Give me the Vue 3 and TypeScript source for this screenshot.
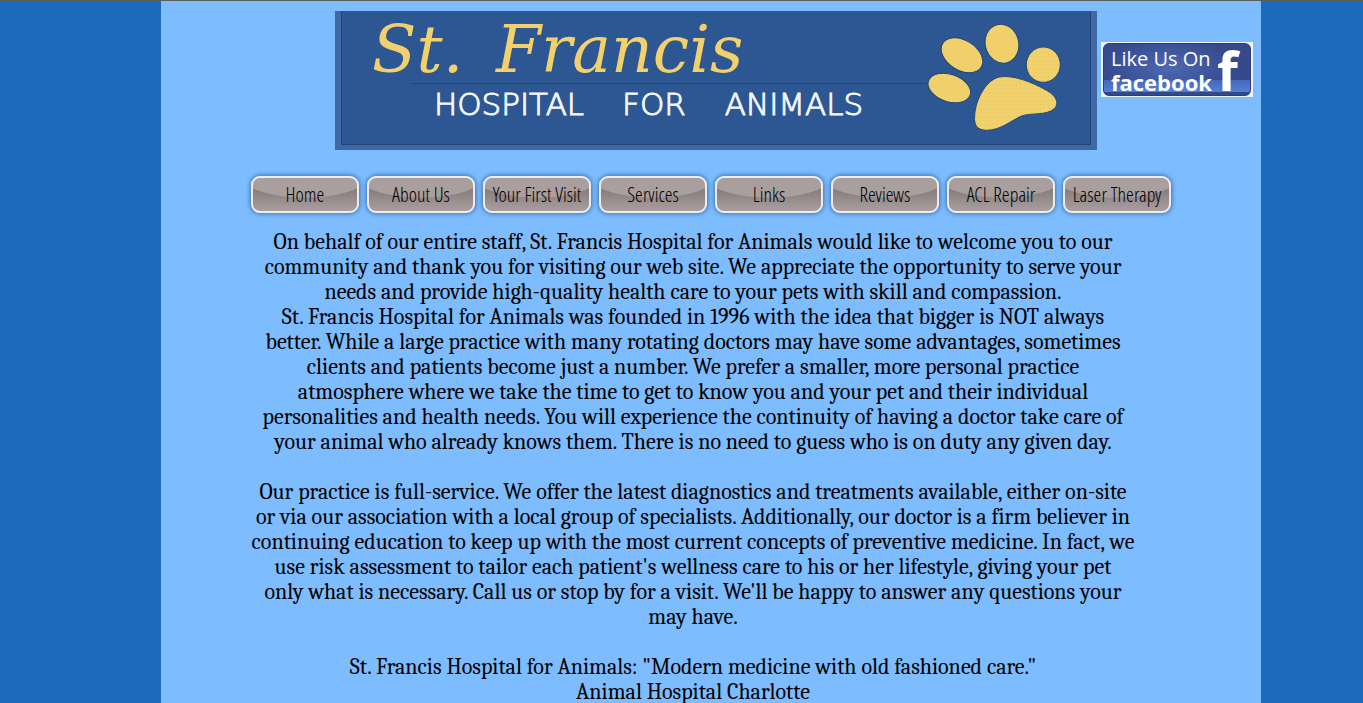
<script setup lang="ts">
interface Paragraph {
  id: string
  lines: string[]
}

const navItems: string[] = [
  'Home',
  'About Us',
  'Your First Visit',
  'Services',
  'Links',
  'Reviews',
  'ACL Repair',
  'Laser Therapy',
]

const paragraphs: Paragraph[] = [
  {
    id: 'welcome',
    lines: [
      'On behalf of our entire staff, St. Francis Hospital for Animals would like to welcome you to our',
      'community and thank you for visiting our web site. We appreciate the opportunity to serve your',
      'needs and provide high-quality health care to your pets with skill and compassion.',
      'St. Francis Hospital for Animals was founded in 1996 with the idea that bigger is NOT always',
      'better. While a large practice with many rotating doctors may have some advantages, sometimes',
      'clients and patients become just a number. We prefer a smaller, more personal practice',
      'atmosphere where we take the time to get to know you and your pet and their individual',
      'personalities and health needs. You will experience the continuity of having a doctor take care of',
      'your animal who already knows them. There is no need to guess who is on duty any given day.',
    ],
  },
  {
    id: 'practice',
    lines: [
      'Our practice is full-service. We offer the latest diagnostics and treatments available, either on-site',
      'or via our association with a local group of specialists. Additionally, our doctor is a firm believer in',
      'continuing education to keep up with the most current concepts of preventive medicine. In fact, we',
      "use risk assessment to tailor each patient's wellness care to his or her lifestyle, giving your pet",
      "only what is necessary. Call us or stop by for a visit. We'll be happy to answer any questions your",
      'may have.',
    ],
  },
  {
    id: 'motto',
    lines: [
      'St. Francis Hospital for Animals: "Modern medicine with old fashioned care."',
      'Animal Hospital Charlotte',
    ],
  },
]
</script>

<template>
  <div class="page">
    <div class="column">
      <header class="header">
        <svg class="banner" viewBox="0 0 762 139" role="img" aria-label="St. Francis Hospital for Animals">
          <defs>
            <pattern id="weave" width="4" height="4" patternUnits="userSpaceOnUse">
              <rect width="4" height="4" fill="#2d5793" />
              <path d="M0 0h2v1h-2zM2 2h2v1h-2z" fill="#305a97" />
              <path d="M3 0h1v2h-1zM1 2h1v2h-1z" fill="#2a5490" />
            </pattern>
            <pattern id="cloth" width="12" height="12" patternUnits="userSpaceOnUse">
              <rect width="12" height="12" fill="#f2d26c" />
              <path d="M0 0h12v2h-12zM0 0h2v12h-2z" fill="#edcd69" />
            </pattern>
          </defs>
          <rect width="762" height="139" fill="#3f68a5" />
          <rect x="6" width="750" height="134" fill="url(#weave)" />
          <path d="M6.500 0V133.500H755.500V0" fill="none" stroke="#1f447c" />
          <path d="M76 72.500H600" stroke="#23497f" />
          <text class="script" x="37" y="61">St.</text>
          <text class="script" x="161" y="61">Francis</text>
          <text class="caps" x="174" y="104">HOSPITAL</text>
          <text class="caps" x="319" y="104">FOR</text>
          <text class="caps" x="459" y="104">ANIMALS</text>
          <g transform="translate(385 -11) scale(0.3333)" fill="url(#cloth)" stroke="#234675" stroke-width="3">
            <ellipse cx="688" cy="264" rx="66" ry="41" transform="rotate(19 688 264)" />
            <ellipse cx="726" cy="166" rx="68" ry="45" transform="rotate(32 726 166)" />
            <ellipse cx="846" cy="131" rx="50" ry="59" transform="rotate(-15 846 131)" />
            <ellipse cx="970" cy="194" rx="51" ry="53" />
            <path d="M764 350C765 302 797 240 838 231C880 224 935 246 978 270C1007 286 1020 308 1003 326C981 347 932 338 905 348C872 362 844 390 800 391C770 390 762 374 764 350Z" />
          </g>
        </svg>
        <a class="facebook" href="#facebook">
          <span class="badge">
            <span class="like">
              <span class="like-top">Like Us On</span>
              <span class="like-name">facebook</span>
            </span>
            <span class="like-f" aria-hidden="true">f</span>
          </span>
        </a>
      </header>

      <nav class="nav">
        <a v-for="item in navItems" :key="item" class="tab" href="#">{{ item }}</a>
      </nav>

      <main class="copy">
        <p v-for="paragraph in paragraphs" :key="paragraph.id" class="paragraph">
          <span v-for="line in paragraph.lines" :key="line" class="line">{{ line }}</span>
        </p>
      </main>
    </div>
  </div>
</template>

<style>
body {
  margin: 0;
  background: #1d69bb;
}
</style>

<style scoped>
.page {
  display: grid;
  grid-template-columns: 161fr minmax(0, 1100px) 102fr;
  min-height: 100vh;
  box-sizing: border-box;
  border-top: 1px solid #5c5c5c;
  background: #1d69bb;
}

.column {
  grid-column: 2;
  background: #7cbcff;
}

.header {
  display: flex;
  justify-content: flex-end;
  gap: 4px;
  padding: 10px 8px 0;
}

.banner {
  display: block;
  flex: 0 1 762px;
  min-width: 0;
}

.script {
  font-family: "DejaVu Serif", serif;
  font-size: 65px;
  font-style: italic;
  fill: #f2d06b;
}

.caps {
  font-family: "DejaVu Sans Light", "DejaVu Sans", sans-serif;
  font-size: 31px;
  font-weight: 200;
  text-anchor: middle;
  fill: #f4f8ff;
  stroke: #f4f8ff;
  stroke-width: 1px;
}

.facebook {
  align-self: flex-start;
  flex: 0 0 152px;
  box-sizing: border-box;
  margin-top: 31px;
  padding: 1px 2px;
  color: #fff;
  font-family: "Open Sans", sans-serif;
  text-decoration: none;
  background: #eef2fa;
}

.badge {
  display: flex;
  justify-content: space-between;
  box-sizing: border-box;
  height: 53px;
  padding: 3px 12px 0 7px;
  border: 1px solid #2c3e74;
  border-radius: 6px;
  background:
    linear-gradient(transparent 70%, #4468bd 71%, #5580d6 94%, #34498b 95%),
    radial-gradient(ellipse 70px 30px at 45% 45%, #4d68b3, #35498b);
}

.like {
  display: flex;
  flex-direction: column;
  white-space: nowrap;
}

.like-top {
  font-size: 20px;
  line-height: 24px;
}

.like-name {
  font-size: 22px;
  font-weight: 700;
  line-height: 22px;
}

.like-f {
  font-size: 54px;
  font-weight: 700;
  line-height: 46px;
}

.nav {
  display: flex;
  justify-content: center;
  gap: 8px;
  padding-top: 26px;
}

.tab {
  display: flex;
  flex: 0 1 108px;
  align-items: center;
  justify-content: center;
  box-sizing: border-box;
  height: 37px;
  border: 2px solid #eeecec;
  border-radius: 9px;
  color: #000;
  font-family: "Open Sans Condensed Light", "Open Sans Condensed", "Liberation Sans Narrow", sans-serif;
  font-size: 20px;
  font-weight: 300;
  text-decoration: none;
  white-space: nowrap;
  background:
    radial-gradient(ellipse 66px 24px at 50% -4px, #a99f9f 97%, transparent 100%),
    linear-gradient(#857a7a 0, #8d8282 45%, #a99f9f 100%);
  box-shadow: 0 0 4px 1px #3f74b5;
}

.copy {
  display: flex;
  flex-direction: column;
  gap: 25px;
  padding: 17px 126px 0 90px;
  color: #000;
  font-family: Cambria, "Liberation Serif", serif;
  font-size: 22px;
  line-height: 25px;
  text-align: center;
}

.paragraph {
  margin: 0;
}

.line {
  display: flex;
  justify-content: center;
  white-space: nowrap;
}
</style>
